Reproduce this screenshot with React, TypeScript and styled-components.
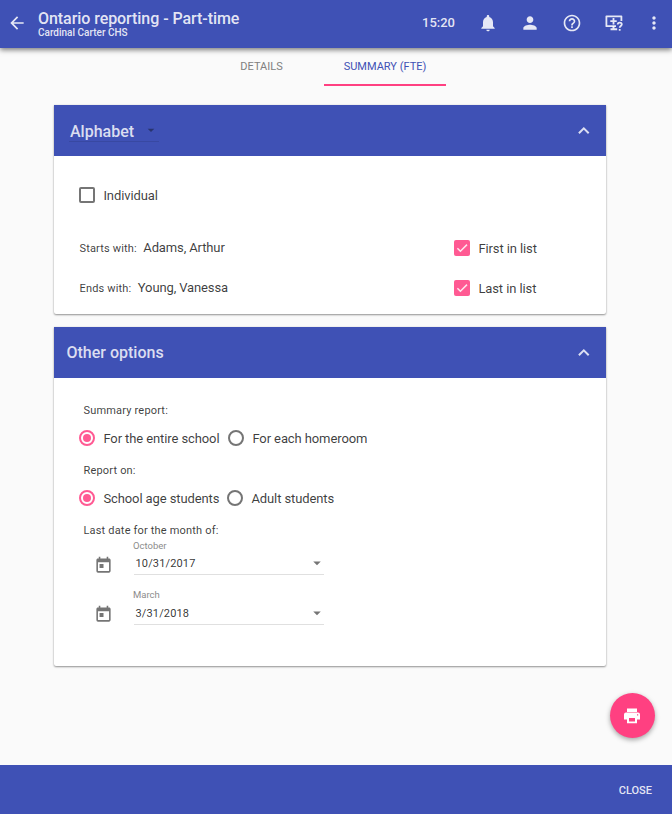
import React from "react";
import styled, { createGlobalStyle } from "styled-components";
import {
  MdArrowBack,
  MdArrowDropDown,
  MdHelpOutline,
  MdMoreVert,
  MdNotifications,
  MdPerson,
  MdToday,
} from "react-icons/md";

const GlobalStyle = createGlobalStyle`
  *, *::before, *::after { box-sizing: border-box; }
  body {
    margin: 0;
    background: #fafafa;
    color: rgba(0, 0, 0, 0.77);
    font-family: Roboto, "Liberation Sans", sans-serif;
    font-size: 13px;
  }
`;

const Page = styled.div`
  position: relative;
  display: flex;
  flex-direction: column;
  width: 672px;
  height: 814px;
  overflow: hidden;
`;

const Toolbar = styled.header`
  display: flex;
  align-items: center;
  flex: none;
  height: 48px;
  padding: 0 0 3px 7px;
  background: #3f51b5;
  color: rgba(255, 255, 255, 0.87);
  box-shadow: 0 2px 5px rgba(0, 0, 0, 0.5);
`;

const IconButton = styled.button<{ $width?: number }>`
  display: flex;
  align-items: center;
  justify-content: center;
  flex: none;
  width: ${(p) => p.$width ?? 20}px;
  height: 20px;
  padding: 0;
  border: 0;
  background: none;
  color: inherit;
`;

const Heading = styled.div`
  display: flex;
  flex-direction: column;
  flex: 1;
  margin-left: 11px;
  padding-top: 3px;
  white-space: nowrap;
`;

const Title = styled.h1`
  margin: 0;
  font-size: 16px;
  font-weight: 500;
  line-height: 17px;
  letter-spacing: -0.06px;
`;

const Subtitle = styled.div`
  font-size: 10px;
  font-weight: 500;
  line-height: 12px;
`;

const Clock = styled.time`
  margin-right: 12px;
  font-size: 13px;
  font-weight: 500;
`;

const Tabs = styled.nav`
  display: flex;
  flex: none;
  height: 38px;
  margin-left: 220px;
`;

const Tab = styled.a<{ $active?: boolean; $width: number }>`
  width: ${(p) => p.$width}px;
  padding-top: 11px;
  border-bottom: 2px solid ${(p) => (p.$active ? "#ff4081" : "transparent")};
  color: ${(p) => (p.$active ? "#3f51b5" : "#808080")};
  font-size: 11px;
  line-height: 16px;
  text-align: center;
`;

const TabGap = styled.span`
  width: 21px;
`;

const Cards = styled.main`
  display: flex;
  flex: 1;
  flex-direction: column;
  gap: 13px;
  padding: 19px 66px 0 54px;
`;

const Card = styled.section<{ $height: number }>`
  height: ${(p) => p.$height}px;
  border-radius: 0 0 2px 2px;
  background: #fff;
  box-shadow: 0 1px 2px rgba(0, 0, 0, 0.4), 0 0 2px rgba(0, 0, 0, 0.1);
`;

const CardHeader = styled.header<{ $inset: number }>`
  display: flex;
  align-items: center;
  justify-content: space-between;
  height: 51px;
  padding: 0 12px 0 ${(p) => p.$inset}px;
  background: #3f51b5;
  color: rgba(255, 255, 255, 0.82);
`;

const CardTitle = styled.h2`
  margin: 0;
  font-size: 16px;
  font-weight: 500;
  line-height: 20px;
`;

const SortSelect = styled.div`
  display: flex;
  align-items: center;
  justify-content: space-between;
  width: 90px;
  height: 22px;
  padding: 3px 0 0 1px;
  border-bottom: 1px solid rgba(0, 0, 0, 0.1);

  svg {
    margin-bottom: 4px;
    color: #28346f;
  }
`;

const CardBody = styled.div<{ $top: number }>`
  display: flex;
  flex-direction: column;
  padding: ${(p) => p.$top}px 25px 0;
`;

const Row = styled.div<{ $height: number; $after?: number }>`
  display: flex;
  align-items: center;
  height: ${(p) => p.$height}px;
  margin-bottom: ${(p) => p.$after ?? 0}px;
`;

const Option = styled.label<{ $width: number }>`
  display: flex;
  align-items: center;
  gap: 8.4px;
  width: ${(p) => p.$width}px;
  font-size: 13px;
  letter-spacing: -0.1px;
  white-space: nowrap;
`;

const Box = styled.span<{ $checked?: boolean }>`
  display: flex;
  flex: none;
  width: 16px;
  height: 16px;
  border: ${(p) => (p.$checked ? "0" : "2px solid #757575")};
  border-radius: 2px;
  background: ${(p) => (p.$checked ? "#ff5a93" : "transparent")};
`;

const Dot = styled.span<{ $checked?: boolean }>`
  display: flex;
  align-items: center;
  justify-content: center;
  flex: none;
  width: 16px;
  height: 16px;
  border: 2px solid ${(p) => (p.$checked ? "#ff5a93" : "#757575")};
  border-radius: 50%;

  &::after {
    content: "";
    width: 8px;
    height: 8px;
    border-radius: 50%;
    background: ${(p) => (p.$checked ? "#ff5a93" : "transparent")};
  }
`;

const Field = styled.div`
  display: flex;
  flex: 1;
  align-items: baseline;
  gap: 6.5px;
  padding: 0 0 2px 0.5px;
  letter-spacing: -0.12px;
`;

const Caption = styled.span`
  font-size: 11px;
  letter-spacing: 0.16px;
`;

const Label = styled.div`
  height: 20px;
  padding-left: 4.5px;
  font-size: 11px;
  line-height: 20px;
  letter-spacing: 0.18px;
`;

const DateRows = styled.div`
  display: flex;
  flex-direction: column;
  margin-top: -1px;
`;

const DateRow = styled.div<{ $height: number }>`
  display: flex;
  align-items: flex-end;
  height: ${(p) => p.$height}px;
  padding-left: 15px;
  color: #757575;
`;

const CalendarSlot = styled.div<{ $lift: number }>`
  display: flex;
  width: 40px;
  padding-bottom: ${(p) => p.$lift}px;
`;

const DateField = styled.div`
  width: 190px;
`;

const Month = styled.div<{ $lift: number }>`
  height: ${(p) => 11 + p.$lift}px;
  margin-left: -1px;
  font-size: 9.5px;
  line-height: 11px;
  color: #8c8c8c;
`;

const DateSelect = styled.div`
  display: flex;
  align-items: center;
  justify-content: space-between;
  height: 24px;
  padding-left: 1.5px;
  border-bottom: 1px solid #e0e0e0;
  color: rgba(0, 0, 0, 0.8);
  font-size: 11px;
  letter-spacing: 0.15px;

  svg {
    margin-right: -2px;
    color: #757575;
  }
`;

const DateValue = styled.span`
  padding-top: 2px;
`;

const PrintButton = styled.button`
  position: absolute;
  right: 17px;
  bottom: 76px;
  display: flex;
  align-items: center;
  justify-content: center;
  width: 45px;
  height: 45px;
  padding: 0 1px 0 0;
  border: 0;
  border-radius: 50%;
  background: #ff4081;
  color: #fff;
  box-shadow: 0 2px 5px rgba(0, 0, 0, 0.35);
`;

const Footer = styled.footer`
  display: flex;
  align-items: center;
  justify-content: flex-end;
  flex: none;
  height: 49px;
  padding-right: 20px;
  background: #3f51b5;
`;

const CloseButton = styled.button`
  padding: 2px 0 0;
  border: 0;
  background: none;
  color: rgba(255, 255, 255, 0.87);
  font: 500 11px Roboto, sans-serif;
`;

const SupportIcon = () => (
  <svg width="20" height="20" viewBox="0 0 20 20" fill="none" stroke="currentColor">
    <path d="M12 13.2H2.4V3.3h15V8" strokeWidth="1.8" strokeLinejoin="round" />
    <path d="M9.5 5v6.4M6.3 8.2h6.4" strokeWidth="1.8" />
    <path d="M6.5 16.3h6.7M9.5 13v3" strokeWidth="2" />
    <path d="M13.7 11.6c0-2.7 4.1-2.6 4.1-.3 0 1.7-2.1 1.7-2.1 3.5M15.7 15.9v1.8" strokeWidth="1.8" />
  </svg>
);

const PrinterIcon = () => (
  <svg width="20" height="20" viewBox="0 0 20 20" fill="currentColor" fillRule="evenodd">
    <path d="M5 2.5h10V6H5zM4 6.5h12a2 2 0 0 1 2 2v5h-3v3.8H5v-3.8H2v-5a2 2 0 0 1 2-2zM7 12v3.6h6V12zM15 8.2v1.2h1.2V8.2z" />
  </svg>
);

const CollapseIcon = () => (
  <svg width="20" height="20" viewBox="0 0 20 20" fill="none" stroke="currentColor" strokeWidth="2">
    <path d="M4.9 12.2L9.8 7.3l4.9 4.9" />
  </svg>
);

const Tick = () => (
  <svg width="16" height="16" viewBox="0 0 16 16" fill="none" stroke="#ffe6ee" strokeWidth="1.5">
    <path d="M3.4 8.2l3 3L13 4.6" />
  </svg>
);

type ChoiceProps = { label: string; checked?: boolean; width: number };

const Checkbox = ({ label, checked, width }: ChoiceProps) => (
  <Option $width={width}>
    <Box $checked={checked}>{checked && <Tick />}</Box>
    {label}
  </Option>
);

const Radio = ({ label, checked, width }: ChoiceProps) => (
  <Option $width={width}>
    <Dot $checked={checked} />
    {label}
  </Option>
);

type DateProps = { month: string; value: string; height: number; lift?: number };

const DatePicker = ({ month, value, height, lift = 0 }: DateProps) => (
  <DateRow $height={height}>
    <CalendarSlot $lift={lift}>
      <MdToday size={19} />
    </CalendarSlot>
    <DateField>
      <Month $lift={lift}>{month}</Month>
      <DateSelect>
        <DateValue>{value}</DateValue>
        <MdArrowDropDown size={18} />
      </DateSelect>
    </DateField>
  </DateRow>
);

export default function App() {
  return (
    <Page>
      <GlobalStyle />
      <Toolbar>
        <IconButton><MdArrowBack size={20} /></IconButton>
        <Heading>
          <Title>Ontario reporting - Part-time</Title>
          <Subtitle>Cardinal Carter CHS</Subtitle>
        </Heading>
        <Clock>15:20</Clock>
        <IconButton $width={42}><MdNotifications size={20} /></IconButton>
        <IconButton $width={42}><MdPerson size={20} /></IconButton>
        <IconButton $width={41}><MdHelpOutline size={20} /></IconButton>
        <IconButton $width={44}><SupportIcon /></IconButton>
        <IconButton $width={36}><MdMoreVert size={20} /></IconButton>
      </Toolbar>
      <Tabs>
        <Tab $width={83}>DETAILS</Tab>
        <TabGap />
        <Tab $width={122} $active>SUMMARY (FTE)</Tab>
      </Tabs>
      <Cards>
        <Card $height={209}>
          <CardHeader $inset={15}>
            <SortSelect>
              <CardTitle>Alphabet</CardTitle>
              <MdArrowDropDown size={16} />
            </SortSelect>
            <CollapseIcon />
          </CardHeader>
          <CardBody $top={29}>
            <Row $height={20} $after={33}>
              <Checkbox label="Individual" width={120} />
            </Row>
            <Row $height={20} $after={20}>
              <Field><Caption>Starts with:</Caption>Adams, Arthur</Field>
              <Checkbox label="First in list" checked width={127} />
            </Row>
            <Row $height={20}>
              <Field><Caption>Ends with:</Caption>Young, Vanessa</Field>
              <Checkbox label="Last in list" checked width={127} />
            </Row>
          </CardBody>
        </Card>
        <Card $height={339}>
          <CardHeader $inset={12.5}>
            <CardTitle>Other options</CardTitle>
            <CollapseIcon />
          </CardHeader>
          <CardBody $top={23}>
            <Label>Summary report:</Label>
            <Row $height={34} $after={6}>
              <Radio label="For the entire school" checked width={149} />
              <Radio label="For each homeroom" width={150} />
            </Row>
            <Label>Report on:</Label>
            <Row $height={34} $after={6}>
              <Radio label="School age students" checked width={148} />
              <Radio label="Adult students" width={150} />
            </Row>
            <Label>Last date for the month of:</Label>
            <DateRows>
              <DatePicker month="October" value="10/31/2017" height={35} />
              <DatePicker month="March" value="3/31/2018" height={50} lift={1} />
            </DateRows>
          </CardBody>
        </Card>
      </Cards>
      <PrintButton aria-label="Print"><PrinterIcon /></PrintButton>
      <Footer>
        <CloseButton>CLOSE</CloseButton>
      </Footer>
    </Page>
  );
}
